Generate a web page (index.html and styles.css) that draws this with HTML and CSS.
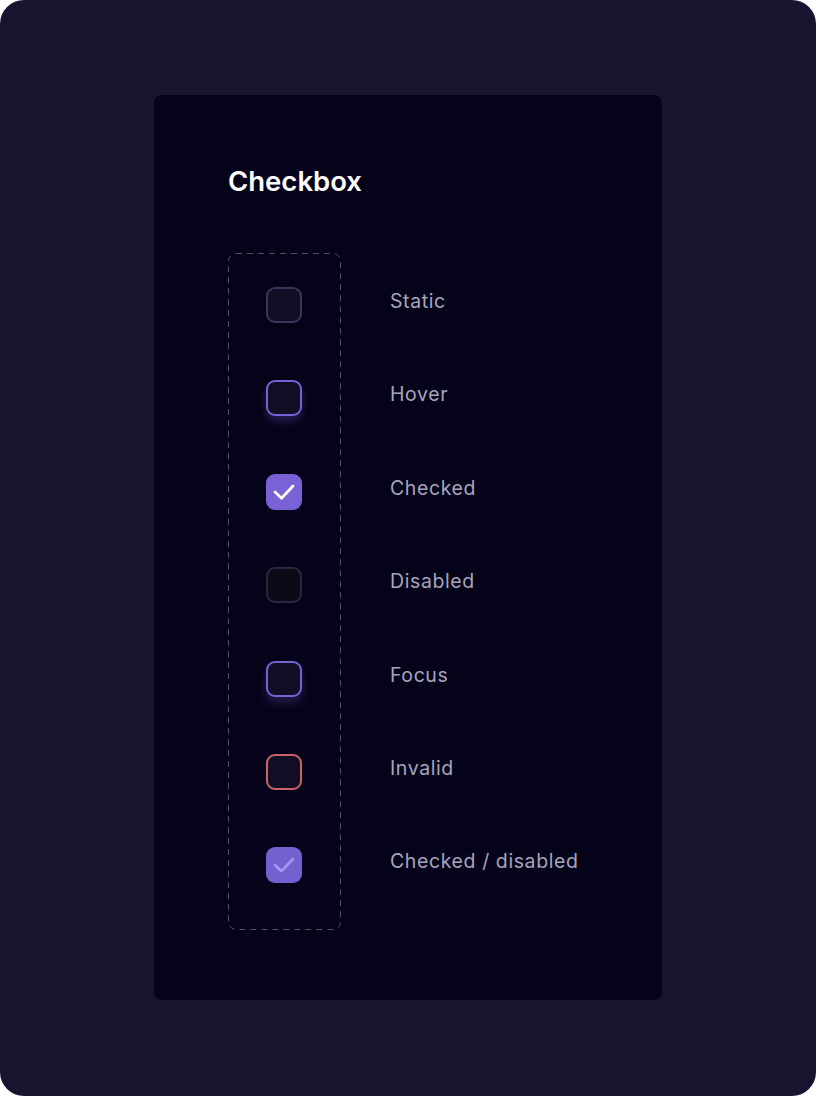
FILE: index.html
```html
<!DOCTYPE html>
<html lang="en">
<head>
<meta charset="utf-8">
<title>Checkbox</title>
<link rel="stylesheet" href="styles.css">
</head>
<body>
<div class="frame">
  <section class="card">
    <h1 class="title">Checkbox</h1>
    <div class="states">
      <div class="boxes">
        <span class="cb cb-static"></span>
        <span class="cb cb-hover"></span>
        <span class="cb cb-checked">
          <svg viewBox="0 0 36 36" width="36" height="36"><path d="M9 18 L15.5 24.2 L27 12" fill="none" stroke="#ffffff" stroke-width="2.8" stroke-linecap="round" stroke-linejoin="round"/></svg>
        </span>
        <span class="cb cb-disabled"></span>
        <span class="cb cb-focus"></span>
        <span class="cb cb-invalid"></span>
        <span class="cb cb-checked-disabled">
          <svg viewBox="0 0 36 36" width="36" height="36"><path d="M9 18 L15.5 24.2 L27 12" fill="none" stroke="#a996f2" stroke-width="2.6" stroke-linecap="round" stroke-linejoin="round"/></svg>
        </span>
      </div>
      <ul class="labels">
        <li>Static</li>
        <li>Hover</li>
        <li>Checked</li>
        <li>Disabled</li>
        <li>Focus</li>
        <li>Invalid</li>
        <li>Checked / disabled</li>
      </ul>
    </div>
  </section>
</div>
</body>
</html>
```

FILE: styles.css
```css
* { box-sizing: border-box; }
html, body { margin: 0; padding: 0; background: #ffffff; }
body { font-family: "Inter", "Liberation Sans", sans-serif; }

.frame {
  width: 816px;
  height: 1096px;
  background: #17142f;
  border-radius: 24px;
  padding: 95px 0 0 154px;
}

.card {
  width: 508px;
  height: 905px;
  background: #05031a;
  border-radius: 8px;
  padding: 70px 0 0 74px;
}

.title {
  margin: 0;
  font-size: 27.5px;
  line-height: 32px;
  font-weight: 600;
  color: #ffffff;
  letter-spacing: 0;
}

.states {
  margin-top: 56px;
  display: flex;
  align-items: flex-start;
}

.boxes {
  width: 113px;
  height: 677px;
  background-image: url("data:image/svg+xml;utf8,<svg xmlns='http://www.w3.org/2000/svg' width='113' height='677'><rect x='0.5' y='0.5' width='112' height='676' rx='7.5' ry='7.5' fill='none' stroke='%23514e6e' stroke-width='1' stroke-dasharray='6 5'/></svg>");
  background-repeat: no-repeat;
  display: flex;
  flex-direction: column;
  align-items: center;
  gap: 57.4px;
  padding: 34px 1px 0 0;
}

.cb {
  flex: none;
  width: 36px;
  height: 36px;
  border-radius: 9px;
  background: #100e24;
  border: 2px solid #38345c;
  display: block;
}

.cb-hover, .cb-focus {
  border-color: #7662d4;
  box-shadow: 0 6px 8px rgba(122, 102, 214, 0.25);
}
.cb-checked {
  background: #7a62d6;
  border: none;
}
.cb svg { display: block; }
.cb-disabled {
  background: #0b0a17;
  border-color: #2a2743;
}
.cb-invalid {
  border-color: #cd6168;
}
.cb-checked-disabled {
  background: #7361d0;
  border: none;
}

.labels {
  list-style: none;
  margin: 0;
  padding: 30px 0 0 49px;
  display: flex;
  flex-direction: column;
  gap: 57.4px;
}
.labels li {
  height: 36px;
  line-height: 36px;
  font-size: 19.5px;
  color: #a7a5bd;
  letter-spacing: 0.6px;
  white-space: nowrap;
}
```
